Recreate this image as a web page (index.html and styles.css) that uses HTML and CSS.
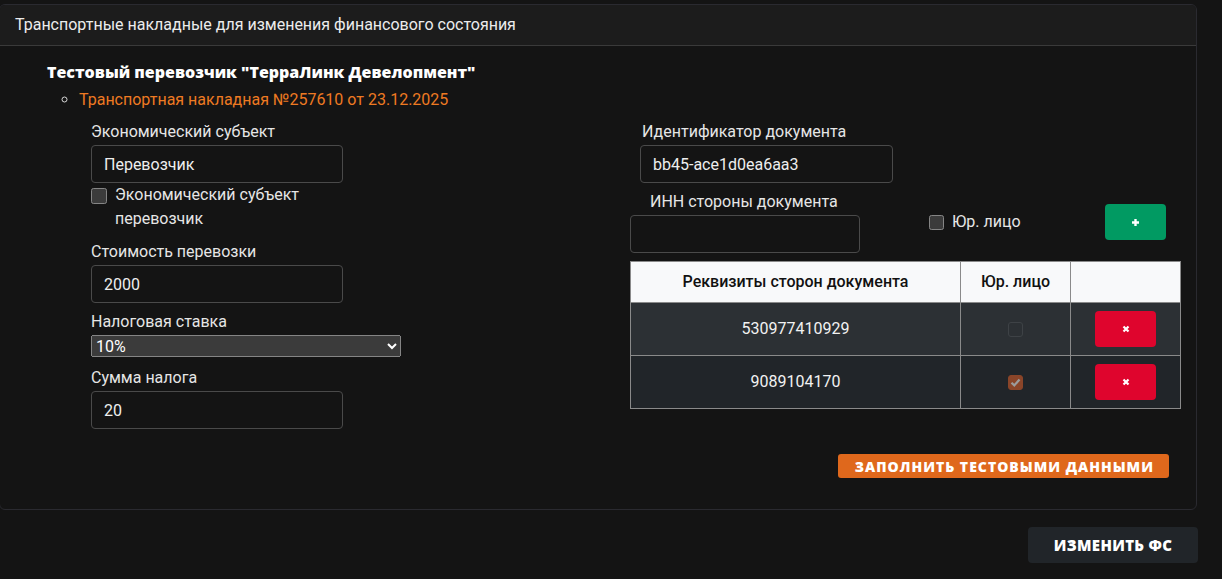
FILE: index.html
```html
<!DOCTYPE html>
<html lang="ru">
<head>
  <meta charset="UTF-8" />
  <meta name="viewport" content="width=device-width, initial-scale=1.0" />
  <title>Изменение ФС</title>
  <link rel="stylesheet" href="styles.css">
</head>
<body>
<div class="page">
  <section class="card">
    <div class="card-header">Транспортные накладные для изменения финансового состояния</div>
    <div class="card-body">
      <h3 class="carrier">Тестовый перевозчик "ТерраЛинк Девелопмент"</h3>
      <ul class="waybills">
        <li>
          <span class="waybill-title">Транспортная накладная №257610 от 23.12.2025</span>
          <div class="waybill-form">
            <div class="col-left">
              <div class="field">
                <label>Экономический субъект</label>
                <input class="text-input" type="text" value="Перевозчик">
              </div>
              <label class="check">
                <input type="checkbox">
                <span>Экономический субъект перевозчик</span>
              </label>
              <div class="field field-cost">
                <label>Стоимость перевозки</label>
                <input class="text-input" type="text" value="2000">
              </div>
              <div class="field field-rate">
                <label>Налоговая ставка</label>
                <select class="rate-select">
                  <option>10%</option>
                  <option>20%</option>
                  <option>Без НДС</option>
                </select>
              </div>
              <div class="field field-tax">
                <label>Сумма налога</label>
                <input class="text-input" type="text" value="20">
              </div>
            </div>

            <div class="col-right">
              <div class="field field-doc">
                <label>Идентификатор документа</label>
                <input class="text-input" type="text" value="bb45-ace1d0ea6aa3">
              </div>
              <div class="party-row">
                <div class="field field-inn">
                  <label>ИНН стороны документа</label>
                  <input class="text-input" type="text">
                </div>
                <label class="check check-inline">
                  <input type="checkbox">
                  <span>Юр. лицо</span>
                </label>
                <button class="btn-add" type="button" aria-label="Добавить">
                  <svg width="9" height="9" viewBox="0 0 9 9"><path d="M4.5 1v7M1 4.5h7" stroke="#fff" stroke-width="2.4"/></svg>
                </button>
              </div>
              <table class="parties">
                <thead>
                  <tr>
                    <th class="c-req">Реквизиты сторон документа</th>
                    <th class="c-legal">Юр. лицо</th>
                    <th class="c-del"></th>
                  </tr>
                </thead>
                <tbody>
                  <tr>
                    <td>530977410929</td>
                    <td><span class="row-check"></span></td>
                    <td><button class="btn-del" type="button" aria-label="Удалить"><svg width="8" height="8" viewBox="0 0 8 8"><path d="M1.5 1.5l5 5M6.5 1.5l-5 5" stroke="#fff" stroke-width="2.2"/></svg></button></td>
                  </tr>
                  <tr>
                    <td>9089104170</td>
                    <td><span class="row-check is-checked"><svg width="11" height="9" viewBox="0 0 11 9"><path d="M1.5 4.8l2.8 2.6 5.2-5.9" fill="none" stroke="#9c9c9c" stroke-width="2.2"/></svg></span></td>
                    <td><button class="btn-del" type="button" aria-label="Удалить"><svg width="8" height="8" viewBox="0 0 8 8"><path d="M1.5 1.5l5 5M6.5 1.5l-5 5" stroke="#fff" stroke-width="2.2"/></svg></button></td>
                  </tr>
                </tbody>
              </table>
            </div>
          </div>
        </li>
      </ul>
      <div class="form-actions">
        <button class="btn-fill" type="button">Заполнить тестовыми данными</button>
      </div>
    </div>
  </section>

  <div class="page-actions">
    <button class="btn-submit" type="button">Изменить ФС</button>
  </div>
</div>
</body>
</html>
```

FILE: styles.css
```css
* {
  margin: 0;
  padding: 0;
  box-sizing: border-box;
}

body {
  font-family: Roboto, 'Liberation Sans', sans-serif;
  font-size: 16px;
  background-color: #141414;
  color: #e6e6e6;
}

.page {
  padding: 4px 24px 0 0;
}

.card {
  margin: 0 1px 0 -1px;
  border: 1px solid #2a2a30;
  border-radius: 6px;
  background-color: #141414;
  overflow: hidden;
}

.card-header {
  height: 41px;
  line-height: 40px;
  padding-left: 15px;
  background-color: #1c1c1c;
  border-bottom: 1px solid #3a3a3a;
  color: #ececec;
}

.card-body {
  padding: 15px 15px 31px 47px;
}

.carrier {
  font-family: 'Open Sans', sans-serif;
  font-size: 16px;
  font-weight: 800;
  line-height: 22px;
  color: #fff;
  margin-bottom: 6px;
}

.waybills {
  list-style: circle;
  padding-left: 32px;
}

.waybills li {
  line-height: 22px;
  color: #d8d8d8;
}

.waybill-title {
  color: #ee7a22;
}

.waybill-form {
  display: grid;
  grid-template-columns: 539px 551px;
  margin: 10px 0 0 12px;
  color: #e6e6e6;
}

.field label {
  display: block;
  line-height: 22px;
  margin-bottom: 2px;
}

.text-input {
  display: block;
  width: 252px;
  height: 38px;
  padding: 0 12px;
  background-color: transparent;
  border: 1px solid #4a4a4a;
  border-radius: 4px;
  color: #eee;
  font-family: inherit;
  font-size: 16px;
  outline: none;
}

.check {
  display: flex;
  align-items: flex-start;
  gap: 8px;
  width: 252px;
  line-height: 24px;
}

.check input {
  flex: none;
  width: 16px;
  height: 16px;
  margin-top: 5px;
  color-scheme: dark;
}

.field-cost {
  margin-top: 10px;
}

.field-rate {
  margin-top: 8px;
}

.field-tax {
  margin-top: 10px;
}

.rate-select {
  display: block;
  width: 310px;
  height: 22px;
  color-scheme: dark;
  font-family: inherit;
  font-size: 16px;
}

/* правая колонка */

.field-doc {
  margin-left: 10px;
}

.field-doc label {
  padding-left: 2px;
}

.field-doc .text-input {
  width: 253px;
}

.party-row {
  display: flex;
  align-items: center;
  margin-top: 8px;
}

.field-inn label {
  padding-left: 20px;
}

.field-inn .text-input {
  width: 230px;
}

.check-inline {
  width: auto;
  align-items: center;
  margin-left: 69px;
}

.check-inline input {
  width: 15px;
  height: 15px;
  margin-top: 0;
}

.btn-add {
  margin-left: auto;
  margin-right: 15px;
  width: 61px;
  height: 36px;
  border: none;
  border-radius: 4px;
  background-color: #019a62;
  display: flex;
  align-items: center;
  justify-content: center;
}

.parties {
  width: 551px;
  margin-top: 8px;
  border-collapse: collapse;
  text-align: center;
}

.parties th,
.parties td {
  border: 1px solid #8a8a8a;
  vertical-align: middle;
}

.parties th {
  height: 41px;
  background-color: #f8f9fa;
  color: #111;
  font-weight: 500;
}

.parties td {
  height: 53px;
  color: #f2f2f2;
}

.parties tbody tr:nth-child(1) {
  background-color: #2c3034;
}

.parties tbody tr:nth-child(2) {
  background-color: #212529;
}

.c-req {
  width: 330px;
}

.c-legal {
  width: 110px;
}

/* отключённый чекбокс в таблице */
.row-check {
  display: inline-flex;
  align-items: center;
  justify-content: center;
  width: 15px;
  height: 15px;
  border: 1px solid #3e4246;
  border-radius: 3px;
  vertical-align: middle;
}

.row-check.is-checked {
  border-color: #8a4529;
  background-color: #8a4529;
}

.btn-del {
  width: 61px;
  height: 36px;
  border: none;
  border-radius: 4px;
  background-color: #df052d;
  display: inline-flex;
  align-items: center;
  justify-content: center;
  vertical-align: middle;
}

.form-actions {
  display: flex;
  justify-content: flex-end;
  margin-top: 25px;
  padding-right: 12px;
}

.btn-fill {
  height: 24px;
  padding: 0 15px 0 17px;
  border: none;
  border-radius: 3px;
  background-color: #df681c;
  color: #fff;
  font-family: 'Open Sans', sans-serif;
  font-size: 14px;
  font-weight: 800;
  letter-spacing: 1px;
  text-transform: uppercase;
}

.page-actions {
  display: flex;
  justify-content: flex-end;
  margin-top: 17px;
}

.btn-submit {
  width: 170px;
  height: 36px;
  border: none;
  border-radius: 4px;
  background-color: #212529;
  color: #fff;
  font-family: 'Open Sans', sans-serif;
  font-size: 15px;
  font-weight: 800;
  letter-spacing: 0.3px;
  text-transform: uppercase;
}
```
